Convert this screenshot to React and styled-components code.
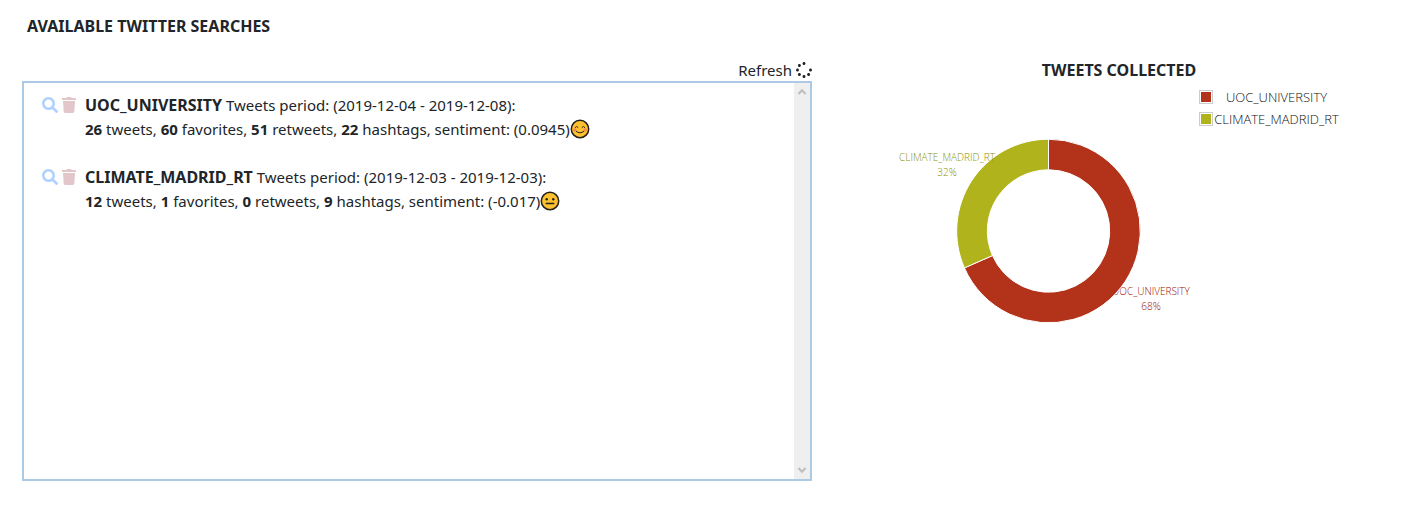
import React from "react";
import styled, { createGlobalStyle } from "styled-components";
import { FaSearch, FaTrash, FaSpinner } from "react-icons/fa";

const GlobalStyle = createGlobalStyle`
  * { box-sizing: border-box; }
  body {
    margin: 0;
    background: #fff;
    color: #212529;
    font: 15px/24px "Noto Sans", "Open Sans", sans-serif;
  }
  button { font: inherit; color: inherit; background: none; border: 0; padding: 0; cursor: pointer; }
`;

const Page = styled.main`
  padding: 14px 0 27px 22px;
`;

const PageTitle = styled.h1`
  margin: 0 0 20px 5px;
  font-size: 16px;
  line-height: 24px;
  font-weight: 700;
`;

const Columns = styled.div`
  display: grid;
  grid-template-columns: 790fr 574fr;
  column-gap: 20px;
  align-items: start;
`;

const SearchColumn = styled.section`
  display: flex;
  flex-direction: column;
  min-width: 0;
`;

const RefreshButton = styled.button`
  display: flex;
  align-items: center;
  gap: 4px;
  align-self: flex-end;
  height: 23px;
`;

const Panel = styled.div`
  display: flex;
  min-height: 400px;
  border: 2px solid #abcae6;
`;

const SearchList = styled.ul`
  flex: 1;
  display: flex;
  flex-direction: column;
  gap: 24px;
  margin: 0;
  padding: 10px 18px;
  list-style: none;
`;

const SearchItem = styled.li`
  display: flex;
`;

const Actions = styled.div`
  display: flex;
  align-items: center;
  gap: 3px;
  width: 43px;
  height: 24px;
`;

const IconButton = styled.button`
  display: flex;
  color: ${(p) => p.$color};
`;

const Line = styled.p`
  display: flex;
  align-items: center;
  margin: 0;
`;

const SearchName = styled.b`
  font-size: 16px;
`;

const ScrollTrack = styled.div`
  display: flex;
  flex-direction: column;
  justify-content: space-between;
  align-items: center;
  width: 16px;
  padding: 5px 0;
  background: #efefef;
`;

const ChartColumn = styled.section`
  display: flex;
  flex-direction: column;
  align-items: center;
`;

const ChartTitle = styled.h2`
  margin: 0;
  font-size: 16px;
  line-height: 24px;
  font-weight: 700;
`;

const ChartBody = styled.div`
  display: flex;
  align-items: flex-start;
`;

const SliceLabel = styled.text`
  font: 300 10px "Open Sans", sans-serif;
  text-anchor: middle;
  fill: ${(p) => p.$color};
`;

const Legend = styled.ul`
  width: 141px;
  margin: 0;
  padding: 4px 0;
  list-style: none;
`;

const LegendItem = styled.li`
  display: flex;
  align-items: center;
  height: 22px;
  font: 300 13px/22px "Open Sans", sans-serif;
  color: #111;
`;

const Swatch = styled.span`
  width: 14px;
  height: 14px;
  border: 1px solid #ccc;
  padding: 1px;
  background: ${(p) => p.$color} content-box;
`;

const LegendName = styled.span`
  flex: 1;
  text-align: center;
`;

const searches = [
  { name: "UOC_UNIVERSITY", from: "2019-12-04", to: "2019-12-08", tweets: 26, favorites: 60, retweets: 51, hashtags: 22, sentiment: "0.0945", happy: true, color: "#b2321a", labelColor: "#9c1200" },
  { name: "CLIMATE_MADRID_RT", from: "2019-12-03", to: "2019-12-03", tweets: 12, favorites: 1, retweets: 0, hashtags: 9, sentiment: "-0.017", happy: false, color: "#b0b31b", labelColor: "#8f9200" },
];

function Face({ happy }) {
  return (
    <svg width="20" height="20" viewBox="0 0 20 20" fill="none" stroke="#25221c" strokeLinecap="round" role="img" aria-label={happy ? "positive" : "neutral"}>
      <circle cx="10" cy="10" r="8.7" fill="#ffc130" strokeWidth="1.5" />
      {happy ? (
        <>
          <circle cx="4.8" cy="10.9" r="1.7" fill="#f78a55" stroke="none" />
          <circle cx="15.2" cy="10.9" r="1.7" fill="#f78a55" stroke="none" />
          <path d="M5.2 8.4Q6.6 6.2 8 8.4M12 8.4Q13.4 6.2 14.8 8.4M6.2 12.3Q10 15.6 13.8 12.3" strokeWidth="1" />
        </>
      ) : (
        <>
          <circle cx="6.7" cy="8.2" r="1.2" fill="#25221c" stroke="none" />
          <circle cx="13.3" cy="8.2" r="1.2" fill="#25221c" stroke="none" />
          <path d="M6.2 12.5H13.8" strokeWidth="1.4" />
        </>
      )}
    </svg>
  );
}

function Chevron({ down }) {
  return (
    <svg width="10" height="8" viewBox="0 0 10 8" aria-hidden="true">
      <path d={down ? "M1.5 2L5 5.8L8.5 2" : "M1.5 6L5 2.2L8.5 6"} fill="none" stroke="#bdbdbd" strokeWidth="2" />
    </svg>
  );
}

const CX = 150.5;
const CY = 149;

function slicePath(start, end, outer = 91.8, inner = 61.2) {
  const at = (turn, r) => {
    const a = turn * 2 * Math.PI;
    return `${CX + r * Math.sin(a)} ${CY - r * Math.cos(a)}`;
  };
  const large = end - start > 0.5 ? 1 : 0;
  return `M${at(start, outer)}A${outer} ${outer} 0 ${large} 1 ${at(end, outer)}L${at(end, inner)}A${inner} ${inner} 0 ${large} 0 ${at(start, inner)}Z`;
}

function Donut() {
  const share = 26 / 38;
  const [uoc, climate] = searches;
  return (
    <svg width="301" height="300" role="img" aria-label="Tweets collected by search">
      <SliceLabel $color={uoc.labelColor} x="253" y="213">{uoc.name}</SliceLabel>
      <SliceLabel $color={uoc.labelColor} x="253" y="228">68%</SliceLabel>
      <path d={slicePath(0, share)} fill={uoc.color} stroke="#fff" />
      <path d={slicePath(share, 1)} fill={climate.color} stroke="#fff" />
      <SliceLabel $color={climate.labelColor} x="49" y="79">{climate.name}</SliceLabel>
      <SliceLabel $color={climate.labelColor} x="49" y="94">32%</SliceLabel>
    </svg>
  );
}

export default function App() {
  return (
    <>
      <GlobalStyle />
      <Page>
        <PageTitle>AVAILABLE TWITTER SEARCHES</PageTitle>
        <Columns>
          <SearchColumn>
            <RefreshButton type="button">
              Refresh <FaSpinner size={16} />
            </RefreshButton>
            <Panel>
              <SearchList>
                {searches.map((s) => (
                  <SearchItem key={s.name}>
                    <Actions>
                      <IconButton type="button" $color="#b0d1ff" aria-label={`View ${s.name}`}>
                        <FaSearch size={16} />
                      </IconButton>
                      <IconButton type="button" $color="#e2c6c9" aria-label={`Delete ${s.name}`}>
                        <FaTrash size={16} />
                      </IconButton>
                    </Actions>
                    <div>
                      <Line>
                        <span><SearchName>{s.name}</SearchName> Tweets period: ({s.from} - {s.to}):</span>
                      </Line>
                      <Line>
                        <span>
                          <b>{s.tweets}</b> tweets, <b>{s.favorites}</b> favorites, <b>{s.retweets}</b> retweets, <b>{s.hashtags}</b> hashtags, sentiment: ({s.sentiment})
                        </span>
                        <Face happy={s.happy} />
                      </Line>
                    </div>
                  </SearchItem>
                ))}
              </SearchList>
              <ScrollTrack>
                <Chevron />
                <Chevron down />
              </ScrollTrack>
            </Panel>
          </SearchColumn>
          <ChartColumn>
            <ChartTitle>TWEETS COLLECTED</ChartTitle>
            <ChartBody>
              <Donut />
              <Legend>
                {searches.map((s) => (
                  <LegendItem key={s.name}>
                    <Swatch $color={s.color} />
                    <LegendName>{s.name}</LegendName>
                  </LegendItem>
                ))}
              </Legend>
            </ChartBody>
          </ChartColumn>
        </Columns>
      </Page>
    </>
  );
}
